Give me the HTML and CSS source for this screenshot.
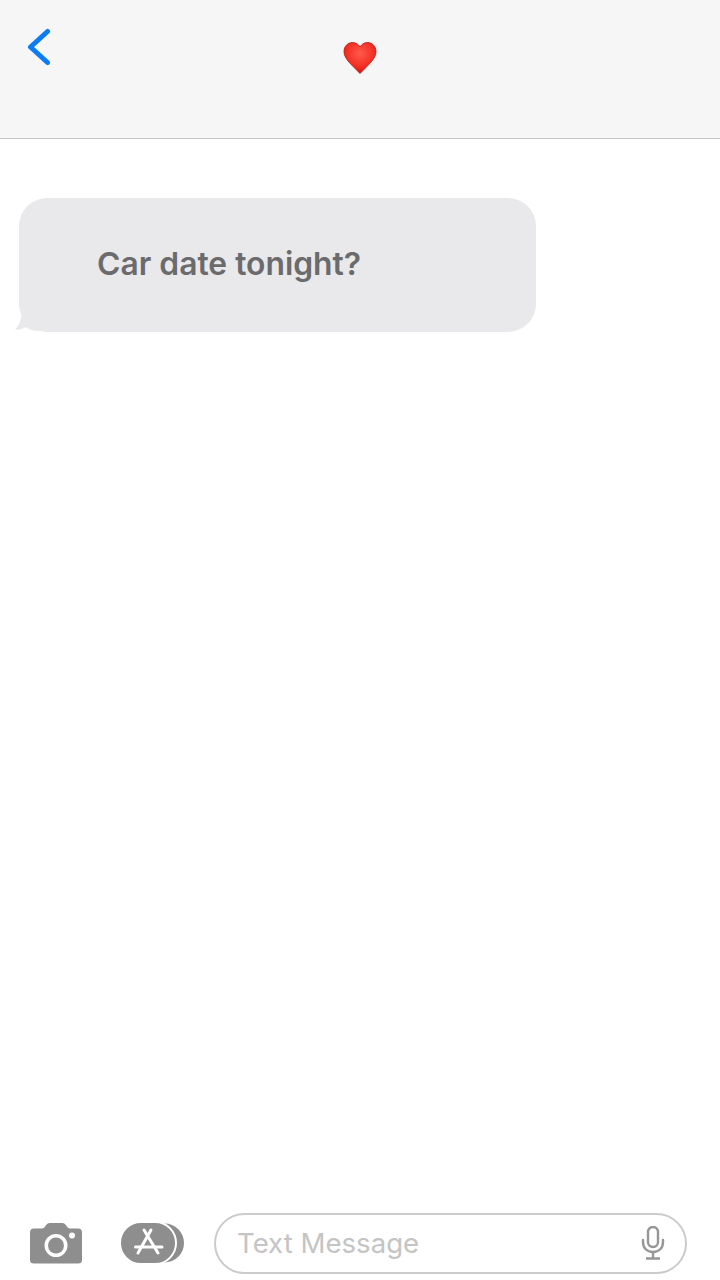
FILE: index.html
```html
<!DOCTYPE html>
<html lang="en">
<head>
  <meta charset="UTF-8">
  <meta name="viewport" content="width=device-width, initial-scale=1.0">
  <title>Messages</title>
  <link rel="stylesheet" href="styles.css">
</head>
<body>
  <div class="app">
    <header class="topbar">
      <svg class="back-icon" width="24" height="38" viewBox="0 0 24 38">
        <path d="M20.5 3.5 L3.5 19 L20.5 34.5" fill="none" stroke="#0a7cf5" stroke-width="5" stroke-linecap="round" stroke-linejoin="round"/>
      </svg>
      <svg class="heart-icon" width="34" height="34" viewBox="0 0 34 34">
        <defs>
          <radialGradient id="heartFill" cx="50%" cy="35%" r="65%">
            <stop offset="0" stop-color="#ff5a4c"/>
            <stop offset="0.7" stop-color="#f22c22"/>
            <stop offset="1" stop-color="#c9140f"/>
          </radialGradient>
        </defs>
        <path d="M17 32.5 C9 24 1 18 1 10.5 C1 5.5 4.6 1.5 9.4 1.5 C12.8 1.5 15.6 3.4 17 6 C18.4 3.4 21.2 1.5 24.6 1.5 C29.4 1.5 33 5.5 33 10.5 C33 18 25 24 17 32.5 Z" fill="url(#heartFill)" stroke="#b5160f" stroke-width="0.8"/>
      </svg>
    </header>

    <main class="thread">
      <div class="bubble">
        <span class="bubble-text">Car date tonight?</span>
        <svg class="bubble-tail" width="24" height="16" viewBox="0 0 24 16">
          <path d="M6 0 C6 5 4 9 0 13.5 C4 14 8 13 11 11 C14 13.5 18 15 24 15 L24 0 Z" fill="#e9e9eb"/>
        </svg>
      </div>
    </main>

    <footer class="composer">
      <svg class="camera-icon" width="54" height="42" viewBox="0 0 54 42">
        <path fill-rule="evenodd" fill="#8e8e8e" d="M5 6.5 H13 Q15 6.5 16.5 4 Q18 1 21 1 H33 Q36 1 37.5 4 Q39 6.5 41 6.5 H49 Q53 6.5 53 10.5 V38 Q53 41.5 49 41.5 H5 Q1 41.5 1 38 V10.5 Q1 6.5 5 6.5 Z M27 12 A11.5 11.5 0 1 0 27 35 A11.5 11.5 0 1 0 27 12 Z M43 10.5 A3 3 0 1 0 43 16.5 A3 3 0 1 0 43 10.5 Z"/>
        <circle cx="27" cy="23.5" r="8" fill="#8e8e8e"/>
      </svg>
      <svg class="apps-icon" width="66" height="44" viewBox="0 0 66 44">
        <rect x="10" y="2.5" width="54" height="39" rx="19.5" fill="#8e8e8e"/>
        <rect x="0" y="1" width="56" height="42" rx="21" fill="#8e8e8e" stroke="#fff" stroke-width="2"/>
        <g fill="none" stroke="#fff" stroke-width="3" stroke-linecap="round">
          <path d="M24 9 L38 32"/>
          <path d="M31 9 L18 32"/>
          <path d="M15.5 26 H42"/>
        </g>
      </svg>
      <div class="message-field">
        <span class="placeholder">Text Message</span>
        <svg class="mic-icon" width="24" height="34" viewBox="0 0 24 34">
          <rect x="7" y="1" width="10" height="20" rx="5" fill="none" stroke="#969696" stroke-width="2.4"/>
          <path d="M2 14 V16 C2 22 6 26 12 26 C18 26 22 22 22 16 V14" fill="none" stroke="#969696" stroke-width="2.4" stroke-linecap="round"/>
          <path d="M12 26 V32 M5 32.5 H19" fill="none" stroke="#969696" stroke-width="2.4"/>
        </svg>
      </div>
    </footer>
  </div>
</body>
</html>
```

FILE: styles.css
```css
html, body {
  margin: 0;
  padding: 0;
  background: white;
}
.app {
  width: 720px;
  height: 1280px;
  display: flex;
  flex-direction: column;
  overflow: hidden;
  font-family: Inter, "Liberation Sans", sans-serif;
}
.topbar {
  position: relative;
  height: 138px;
  flex-shrink: 0;
  background: #f6f6f6;
  border-bottom: 1px solid #c4c4c6;
  display: flex;
  justify-content: center;
  align-items: flex-start;
}
.back-icon {
  position: absolute;
  left: 27px;
  top: 28px;
}
.heart-icon {
  margin-top: 41px;
}
.thread {
  flex: 1;
  padding: 59px 0 0 19px;
}
.bubble {
  position: relative;
  box-sizing: border-box;
  width: 517px;
  height: 134px;
  padding: 0 0 4px 78px;
  background: #e9e9eb;
  border-radius: 28px;
  display: flex;
  align-items: center;
}
.bubble-text {
  font-size: 31.8px;
  font-weight: 600;
  color: #6b6b6d;
  white-space: nowrap;
}
.bubble-tail {
  position: absolute;
  left: -4px;
  bottom: 0;
}
.composer {
  flex-shrink: 0;
  height: 60px;
  padding: 0 33px 7px 29px;
  display: flex;
  align-items: center;
}
.camera-icon {
  flex-shrink: 0;
  margin-right: 37px;
}
.apps-icon {
  flex-shrink: 0;
  margin-right: 28px;
}
.message-field {
  flex: 1;
  box-sizing: border-box;
  height: 61px;
  padding: 0 20px 0 21px;
  border: 2px solid #cbcbcb;
  border-radius: 31px;
  display: flex;
  align-items: center;
  justify-content: space-between;
}
.placeholder {
  font-size: 27.6px;
  color: #c4c4c4;
}
```
